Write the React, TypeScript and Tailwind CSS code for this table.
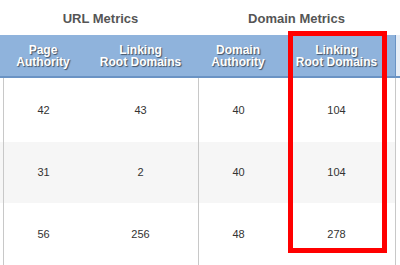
import React from "react";

const rows = [
  { pa: "42", lrd: "43", da: "40", dlrd: "104", alt: false, h: "h-[64px]" },
  { pa: "31", lrd: "2", da: "40", dlrd: "104", alt: true, h: "h-[61px]" },
  { pa: "56", lrd: "256", da: "48", dlrd: "278", alt: false, h: "h-[62px]" },
];

const hdr =
  "flex items-center justify-center text-center text-white font-bold text-[12px] leading-[12px] [text-shadow:1px_1px_1px_rgba(0,0,0,0.55)]";

export default function App() {
  return (
    <div className="relative w-[400px] h-[265px] overflow-hidden bg-white font-['Liberation_Sans',Arial,sans-serif]">
      {/* group titles */}
      <div className="grid grid-cols-[3px_195px_197px_5px] h-[35px]">
        <div />
        <div className="flex items-center justify-center pt-[3px] text-[13px] font-bold text-[#555]">URL Metrics</div>
        <div className="flex items-center justify-center pt-[3px] text-[13px] font-bold text-[#555]">Domain Metrics</div>
        <div />
      </div>
      {/* header */}
      <div className="grid grid-cols-[3px_80px_115px_80px_117px_5px] h-[43px] bg-[#8fb3dc] border-b-2 border-[#6a93c4]">
        <div />
        <div className={hdr}>
          Page
          <br />
          Authority
        </div>
        <div className={hdr}>
          Linking
          <br />
          Root Domains
        </div>
        <div className={hdr}>
          Domain
          <br />
          Authority
        </div>
        <div className={hdr}>
          Linking
          <br />
          Root Domains
        </div>
        <div className="border-l border-[#6a93c4] bg-[#e8eef6]" />
      </div>
      {/* body */}
      {rows.map((r, i) => (
        <div
          key={i}
          className={`grid grid-cols-[3px_80px_115px_80px_117px_5px] ${r.h} text-[11px] text-[#333] ${
            r.alt ? "bg-[#f6f6f6]" : "bg-white"
          }`}
        >
          <div />
          <div className="flex items-center justify-center border-l border-[#c8c8c8]">{r.pa}</div>
          <div className="flex items-center justify-center">{r.lrd}</div>
          <div className="flex items-center justify-center border-l border-[#c8c8c8]">{r.da}</div>
          <div className="flex items-center justify-center">{r.dlrd}</div>
          <div className="border-l border-[#c8c8c8] bg-white" />
        </div>
      ))}
      {/* highlight box */}
      <div className="absolute left-[288px] top-[31px] w-[99px] h-[222px] border-[5px] border-[#ff0000]" />
    </div>
  );
}
